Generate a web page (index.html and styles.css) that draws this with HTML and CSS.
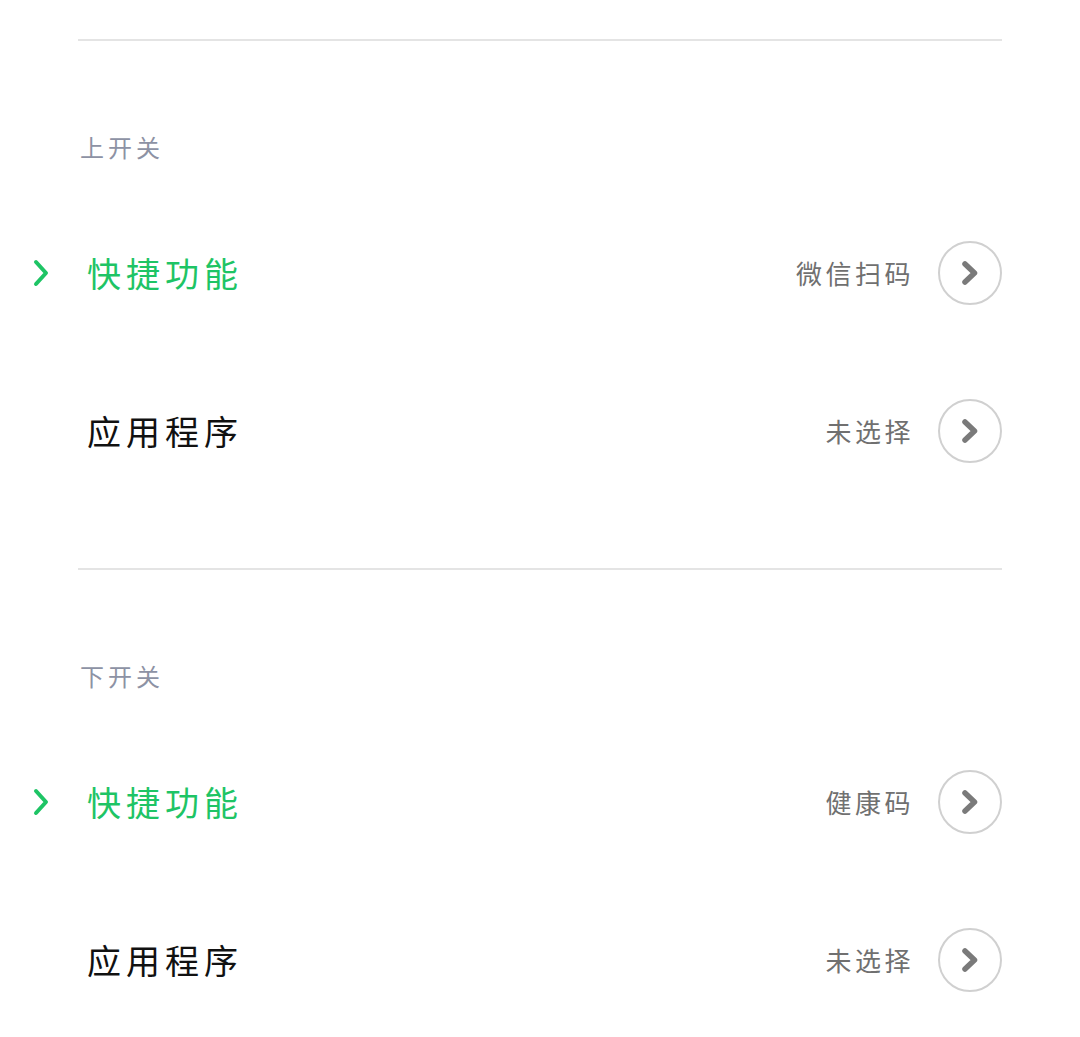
FILE: index.html
```html
<!DOCTYPE html>
<html lang="zh-CN">
<head>
    <meta charset="UTF-8">
    <meta name="viewport" content="width=device-width, initial-scale=1.0">
    <title>开关设置</title>
    <link rel="stylesheet" href="styles.css">
</head>
<body>
    <main class="page">
        <section class="group">
            <h2 class="group-title">上开关</h2>
            <div class="row active">
                <svg class="marker" viewBox="0 0 16 28" width="16" height="28">
                    <polyline points="3,3 13,14 3,25" fill="none" stroke="currentColor" stroke-width="4" stroke-linecap="round" stroke-linejoin="round"/>
                </svg>
                <span class="row-name">快捷功能</span>
                <span class="row-value">微信扫码</span>
                <button class="go" type="button">
                    <svg viewBox="0 0 18 26" width="18" height="26">
                        <polyline points="4,4 13.5,13 4,22" fill="none" stroke="currentColor" stroke-width="5.5" stroke-linecap="round" stroke-linejoin="round"/>
                    </svg>
                </button>
            </div>
            <div class="row">
                <span class="marker"></span>
                <span class="row-name">应用程序</span>
                <span class="row-value">未选择</span>
                <button class="go" type="button">
                    <svg viewBox="0 0 18 26" width="18" height="26">
                        <polyline points="4,4 13.5,13 4,22" fill="none" stroke="currentColor" stroke-width="5.5" stroke-linecap="round" stroke-linejoin="round"/>
                    </svg>
                </button>
            </div>
        </section>
        <section class="group">
            <h2 class="group-title">下开关</h2>
            <div class="row active">
                <svg class="marker" viewBox="0 0 16 28" width="16" height="28">
                    <polyline points="3,3 13,14 3,25" fill="none" stroke="currentColor" stroke-width="4" stroke-linecap="round" stroke-linejoin="round"/>
                </svg>
                <span class="row-name">快捷功能</span>
                <span class="row-value">健康码</span>
                <button class="go" type="button">
                    <svg viewBox="0 0 18 26" width="18" height="26">
                        <polyline points="4,4 13.5,13 4,22" fill="none" stroke="currentColor" stroke-width="5.5" stroke-linecap="round" stroke-linejoin="round"/>
                    </svg>
                </button>
            </div>
            <div class="row">
                <span class="marker"></span>
                <span class="row-name">应用程序</span>
                <span class="row-value">未选择</span>
                <button class="go" type="button">
                    <svg viewBox="0 0 18 26" width="18" height="26">
                        <polyline points="4,4 13.5,13 4,22" fill="none" stroke="currentColor" stroke-width="5.5" stroke-linecap="round" stroke-linejoin="round"/>
                    </svg>
                </button>
            </div>
        </section>
    </main>
</body>
</html>
```

FILE: styles.css
```css
/* General */
body {
    margin: 0;
    background: #fff;
    color: #111;
    font-family: "Noto Sans CJK SC", "Noto Sans", sans-serif;
}

.page {
    padding-top: 39px;
}

/* Groups */
.group {
    margin: 0 78px;
    border-top: 2px solid #e4e4e4;
    padding-bottom: 58px;
}

.group-title {
    margin: 94px 0 35px 2px;
    font-size: 24px;
    line-height: 24px;
    font-weight: 400;
    letter-spacing: 4px;
    color: #8d92a4;
}

/* Rows */
.row {
    display: flex;
    align-items: center;
    height: 158px;
    margin-left: -45px;
}

.marker {
    flex: none;
    width: 16px;
    height: 28px;
    margin-right: 38px;
    color: #1ec465;
}

.row-name {
    flex: 1;
    font-size: 34px;
    line-height: 40px;
    letter-spacing: 5px;
    color: #111;
}

.row.active .row-name {
    color: #1ec465;
}

.row-value {
    font-size: 26px;
    line-height: 30px;
    letter-spacing: 3.5px;
    color: #707070;
    margin-right: 24px;
}

.go {
    flex: none;
    display: flex;
    align-items: center;
    justify-content: center;
    width: 64px;
    height: 64px;
    padding: 0;
    border: 2px solid #d0d0d0;
    border-radius: 50%;
    background: #fff;
    color: #7a7a7a;
}
```
